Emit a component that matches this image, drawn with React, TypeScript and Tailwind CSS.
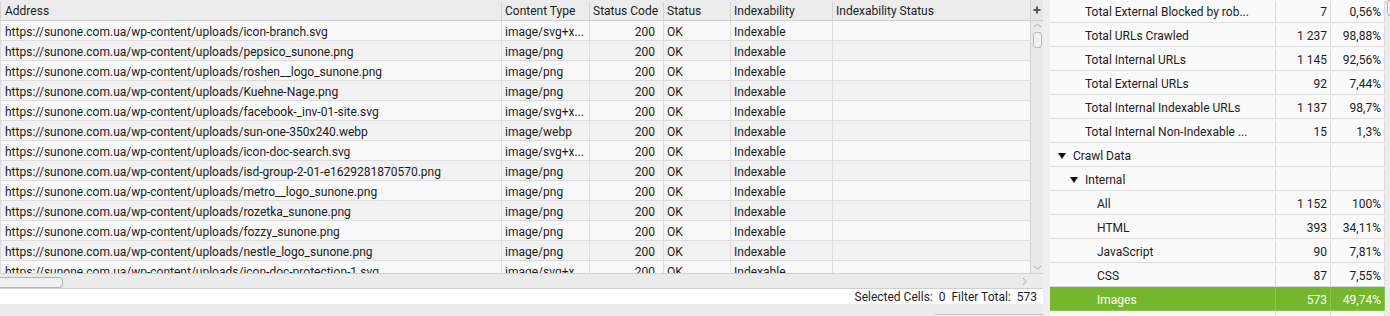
import React from "react";

type UrlRow = {
  address: string;
  type: string;
};

const base = "https://sunone.com.ua/wp-content/uploads/";

const urlRows: UrlRow[] = [
  { address: "icon-branch.svg", type: "image/svg+x..." },
  { address: "pepsico_sunone.png", type: "image/png" },
  { address: "roshen__logo_sunone.png", type: "image/png" },
  { address: "Kuehne-Nage.png", type: "image/png" },
  { address: "facebook-_inv-01-site.svg", type: "image/svg+x..." },
  { address: "sun-one-350x240.webp", type: "image/webp" },
  { address: "icon-doc-search.svg", type: "image/svg+x..." },
  { address: "isd-group-2-01-e1629281870570.png", type: "image/png" },
  { address: "metro__logo_sunone.png", type: "image/png" },
  { address: "rozetka_sunone.png", type: "image/png" },
  { address: "fozzy_sunone.png", type: "image/png" },
  { address: "nestle_logo_sunone.png", type: "image/png" },
  { address: "icon-doc-protection-1.svg", type: "image/svg+x..." },
];

type SummaryRow = {
  label: string;
  count?: string;
  pct?: string;
  level: 0 | 1 | 2; // 0 = Crawl Data, 1 = totals / Internal, 2 = leafs
  toggle?: boolean;
  active?: boolean;
};

const summary: SummaryRow[] = [
  { label: "Total External Blocked by rob...", count: "7", pct: "0,56%", level: 1 },
  { label: "Total URLs Crawled", count: "1 237", pct: "98,88%", level: 1 },
  { label: "Total Internal URLs", count: "1 145", pct: "92,56%", level: 1 },
  { label: "Total External URLs", count: "92", pct: "7,44%", level: 1 },
  { label: "Total Internal Indexable URLs", count: "1 137", pct: "98,7%", level: 1 },
  { label: "Total Internal Non-Indexable ...", count: "15", pct: "1,3%", level: 1 },
  { label: "Crawl Data", level: 0, toggle: true },
  { label: "Internal", level: 1, toggle: true },
  { label: "All", count: "1 152", pct: "100%", level: 2 },
  { label: "HTML", count: "393", pct: "34,11%", level: 2 },
  { label: "JavaScript", count: "90", pct: "7,81%", level: 2 },
  { label: "CSS", count: "87", pct: "7,55%", level: 2 },
  { label: "Images", count: "573", pct: "49,74%", level: 2, active: true },
  { label: "", level: 2 },
];

function Triangle() {
  return (
    <svg width="8" height="6" viewBox="0 0 8 6" className="shrink-0">
      <path d="M0 0 H8 L4 6 Z" fill="#111" />
    </svg>
  );
}

function Chevron({ dir }: { dir: "up" | "down" | "right" }) {
  const d =
    dir === "up" ? "M1 5 L4.5 2 L8 5" : dir === "down" ? "M1 2 L4.5 5 L8 2" : "M2 1 L5 4.5 L2 8";
  return (
    <svg width="9" height="9" viewBox="0 0 9 9">
      <path d={d} fill="none" stroke="#a8a8a8" strokeWidth="1" />
    </svg>
  );
}

export default function App() {
  return (
    <div className="flex h-[316px] w-[1390px] overflow-hidden bg-[#efefef] font-['Roboto',sans-serif] text-[12px] text-[#1c1c1c]">
      {/* Left: URL table */}
      <div className="flex w-[1043px] shrink-0 flex-col">
        <div className="flex h-[274px] border-b border-[#d2d2d2]">
          <div className="w-[1030px] overflow-hidden">
            {/* header */}
            <div className="flex h-[21px] border-b border-[#d0d0d0] bg-[#ececec] pt-[2px] leading-[18px]">
              <div className="w-[502px] border-r border-l border-[#d4d4d4] pl-[4px]">Address</div>
              <div className="w-[88px] border-r border-[#d4d4d4] pl-[3px]">Content Type</div>
              <div className="w-[74px] border-r border-[#d4d4d4] pl-[3px]">Status Code</div>
              <div className="w-[67px] border-r border-[#d4d4d4] pl-[3px]">Status</div>
              <div className="w-[102px] border-r border-[#d4d4d4] pl-[3px]">Indexability</div>
              <div className="flex-1 pl-[3px]">Indexability Status</div>
            </div>
            {urlRows.map((row, i) => (
              <div
                key={row.address}
                className={`flex h-[20px] border-b border-[#dcdcdc] ${
                  i % 2 === 0 ? "bg-[#f9f9f9]" : "bg-[#f1f1f1]"
                }`}
              >
                <div className="w-[502px] whitespace-nowrap border-r border-l border-[#dcdcdc] pt-[2px] pl-[4px] leading-[18px]">
                  {base + row.address}
                </div>
                <div className="w-[88px] whitespace-nowrap border-r border-[#dcdcdc] pt-[2px] pl-[3px] leading-[18px]">
                  {row.type}
                </div>
                <div className="w-[74px] border-r border-[#dcdcdc] pt-[2px] pr-[8px] text-right leading-[18px]">200</div>
                <div className="w-[67px] border-r border-[#dcdcdc] pt-[2px] pl-[3px] leading-[18px]">OK</div>
                <div className="w-[102px] border-r border-[#dcdcdc] pt-[2px] pl-[3px] leading-[18px]">Indexable</div>
                <div className="flex-1" />
              </div>
            ))}
          </div>
          {/* vertical scrollbar */}
          <div className="flex w-[13px] flex-col border-l border-[#d4d4d4] bg-[#e9e9e9]">
            <div className="flex h-[21px] items-center justify-center border-b border-[#d0d0d0] bg-[#e6e6e6]">
              <svg width="8" height="8" viewBox="0 0 8 8">
                <path d="M4 0.5 V7.5 M0.5 4 H7.5" stroke="#555" strokeWidth="2" />
              </svg>
            </div>
            <div className="flex justify-center pt-[1px]">
              <Chevron dir="up" />
            </div>
            <div className="mx-auto mt-[1px] h-[16px] w-[9px] rounded-[3px] border border-[#b8b8b8] bg-[#f2f2f2]" />
            <div className="flex-1" />
            <div className="flex justify-center">
              <Chevron dir="down" />
            </div>
          </div>
        </div>

        {/* horizontal scrollbar */}
        <div className="flex h-[15px] items-center border-b border-[#cfcfcf] bg-[#ebebeb]">
          <div className="mt-[2px] h-[11px] w-[63px] rounded-r-[4px] border border-l-0 border-[#b5b5b5] bg-[#f0f0f0]" />
          <div className="flex-1" />
          <div className="mr-[13px] flex items-center">
            <Chevron dir="right" />
          </div>
        </div>

        {/* status bar */}
        <div className="flex h-[15px] items-center justify-end gap-[4px] bg-white pr-[6px] pt-[1px] leading-[14px]">
          <span>Selected Cells:</span>
          <span className="ml-[2px]">0</span>
          <span className="ml-[2px]">Filter Total:</span>
          <span className="ml-[2px]">573</span>
        </div>

        <div className="flex flex-1 justify-end bg-[#ebebeb]">
          <div className="mt-[10px] w-[108px] border-t border-[#c6c6c6]" />
        </div>
      </div>

      {/* splitter */}
      <div className="w-[7px] shrink-0 bg-[#efefef]" />

      {/* Right: overview tree */}
      <div className="flex w-[340px] shrink-0 bg-[#fafafa]">
        <div className="mt-[-1px] w-[335px]">
          {summary.map((row, i) => (
            <div
              key={i}
              className={`flex h-[24px] border-b pt-[2px] ${
                row.active
                  ? "border-[#8cc652] bg-[#74b72c] text-white"
                  : "border-[#dcdcdc] bg-[#fafafa]"
              }`}
            >
              <div
                className={`flex w-[226px] items-center whitespace-nowrap border-r ${
                  row.active ? "border-[#8cc652]" : "border-[#dcdcdc]"
                } ${
                  row.level === 0
                    ? "gap-[7px] pl-[8px]"
                    : row.toggle
                    ? "gap-[7px] pl-[20px]"
                    : row.level === 1
                    ? "pl-[35px]"
                    : "pl-[47px]"
                }`}
              >
                {row.toggle && <Triangle />}
                <span>{row.label}</span>
              </div>
              <div
                className={`flex w-[55px] items-center justify-end border-r pr-[3px] ${
                  row.active ? "border-[#8cc652]" : "border-[#dcdcdc]"
                }`}
              >
                {row.count}
              </div>
              <div
                className={`flex w-[54px] items-center justify-end border-r pr-[3px] ${
                  row.active ? "border-[#8cc652]" : "border-[#dcdcdc]"
                }`}
              >
                {row.pct}
              </div>
            </div>
          ))}
        </div>
        <div className="flex-1 bg-[#ececec]">
          <div className="ml-[2px] h-[16px] w-[6px] rounded-l-[3px] border border-r-0 border-[#b8b8b8] bg-[#f2f2f2]" />
        </div>
      </div>
    </div>
  );
}
